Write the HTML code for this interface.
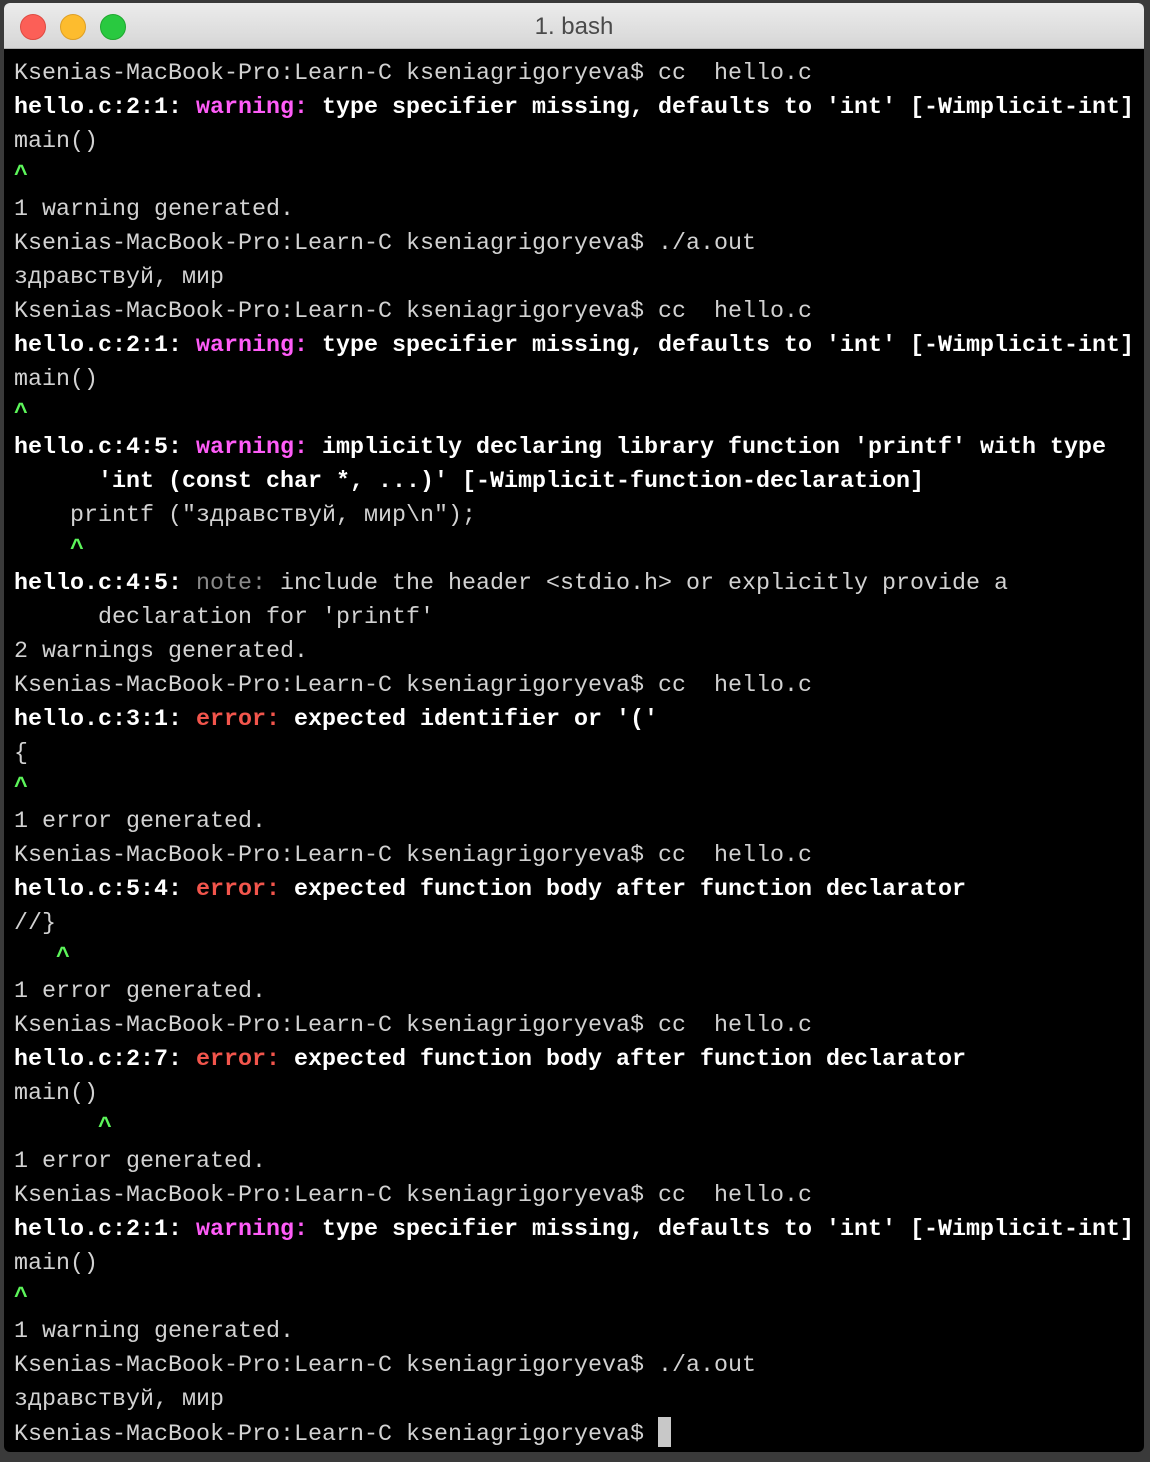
<!DOCTYPE html>
<html><head><meta charset="utf-8"><style>
html,body{margin:0;padding:0;width:1150px;height:1462px;overflow:hidden;background:#3a3a3a;}
.win{position:absolute;left:4px;top:3px;width:1140px;height:1449px;border-radius:6px;overflow:hidden;background:#000;}
.tb{height:45px;background:linear-gradient(#ececec,#d6d6d6);border-bottom:1px solid #b0b0b0;position:relative;}
.tb .t{position:absolute;left:0;right:0;top:10px;text-align:center;font:24px "Liberation Sans",sans-serif;color:#4a4a4a;}
.d{position:absolute;top:11px;width:24px;height:24px;border-radius:50%;}
pre{margin:0;position:absolute;left:10px;top:54px;font-family:"Liberation Mono","DejaVu Sans Mono",monospace;font-size:23.33px;line-height:34px;color:#d2d2d2;}
b{color:#fff;}
.w{color:#ff5cf8;}
.e{color:#f2554c;}
.n{color:#8a8a8a;font-weight:normal;}
.c{color:#5cf55a;font-weight:bold;}
.cur{display:inline-block;width:13px;height:30px;background:#c8c8c8;vertical-align:-7px;}
</style></head><body>
<div class="win">
<div class="tb"><div class="d" style="left:16px;background:#fc5f57;border:1px solid #de4a41;"></div><div class="d" style="left:56px;background:#fdbc2e;border:1px solid #de9f24;"></div><div class="d" style="left:96px;background:#29c940;border:1px solid #1fa82f;"></div><div class="t">1. bash</div></div>
<pre>Ksenias-MacBook-Pro:Learn-C kseniagrigoryeva$ cc  hello.c
<b>hello.c:2:1: <span class="w">warning:</span> type specifier missing, defaults to 'int' [-Wimplicit-int]</b>
main()
<span class="c">^</span>
1 warning generated.
Ksenias-MacBook-Pro:Learn-C kseniagrigoryeva$ ./a.out
здравствуй, мир
Ksenias-MacBook-Pro:Learn-C kseniagrigoryeva$ cc  hello.c
<b>hello.c:2:1: <span class="w">warning:</span> type specifier missing, defaults to 'int' [-Wimplicit-int]</b>
main()
<span class="c">^</span>
<b>hello.c:4:5: <span class="w">warning:</span> implicitly declaring library function 'printf' with type</b>
<b>      'int (const char *, ...)' [-Wimplicit-function-declaration]</b>
    printf ("здравствуй, мир\n");
    <span class="c">^</span>
<b>hello.c:4:5: </b><span class="n">note:</span> include the header &lt;stdio.h&gt; or explicitly provide a
      declaration for 'printf'
2 warnings generated.
Ksenias-MacBook-Pro:Learn-C kseniagrigoryeva$ cc  hello.c
<b>hello.c:3:1: <span class="e">error:</span> expected identifier or '('</b>
{
<span class="c">^</span>
1 error generated.
Ksenias-MacBook-Pro:Learn-C kseniagrigoryeva$ cc  hello.c
<b>hello.c:5:4: <span class="e">error:</span> expected function body after function declarator</b>
//}
   <span class="c">^</span>
1 error generated.
Ksenias-MacBook-Pro:Learn-C kseniagrigoryeva$ cc  hello.c
<b>hello.c:2:7: <span class="e">error:</span> expected function body after function declarator</b>
main()
      <span class="c">^</span>
1 error generated.
Ksenias-MacBook-Pro:Learn-C kseniagrigoryeva$ cc  hello.c
<b>hello.c:2:1: <span class="w">warning:</span> type specifier missing, defaults to 'int' [-Wimplicit-int]</b>
main()
<span class="c">^</span>
1 warning generated.
Ksenias-MacBook-Pro:Learn-C kseniagrigoryeva$ ./a.out
здравствуй, мир
Ksenias-MacBook-Pro:Learn-C kseniagrigoryeva$ <span class="cur"></span></pre>
</div>
</body></html>
